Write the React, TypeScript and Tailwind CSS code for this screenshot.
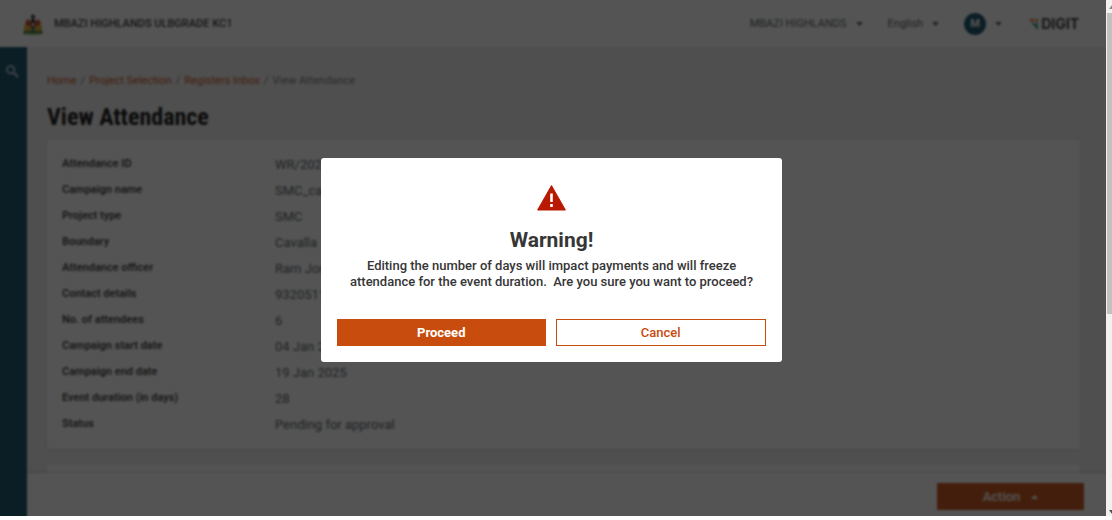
import React from "react";

type Row = { label: string; value: string };

const rows: Row[] = [
  { label: "Attendance ID", value: "WR/2025-01/04/ID-001272" },
  { label: "Campaign name", value: "SMC_campaign" },
  { label: "Project type", value: "SMC" },
  { label: "Boundary", value: "Cavalla" },
  { label: "Attendance officer", value: "Ram Jones" },
  { label: "Contact details", value: "9320511234" },
  { label: "No. of attendees", value: "6" },
  { label: "Campaign start date", value: "04 Jan 2025" },
  { label: "Campaign end date", value: "19 Jan 2025" },
  { label: "Event duration (in days)", value: "28" },
  { label: "Status", value: "Pending for approval" },
];

const crumbs = ["Home", "Project Selection", "Registers Inbox"];

function Caret({ up = false }: { up?: boolean }) {
  return (
    <svg width="7" height="4" viewBox="0 0 7 4" fill="currentColor" aria-hidden="true">
      <path d={up ? "M0 4 3.5 0 7 4z" : "M0 0h7L3.5 4z"} />
    </svg>
  );
}

function Emblem() {
  return (
    <svg width="20" height="21" viewBox="0 0 20 21" aria-hidden="true">
      <path d="M0 17.5Q10 14 20 17.5l-1 2.5q-9 1-18 0z" fill="#2f7a3c" />
      <path d="M3 18.5q7 2.5 14 0v1q-7 2-14 0z" fill="#e0b040" />
      <path d="M1 17 1.5 11 4 5.5 7 9l1 8z" fill="#dba41f" />
      <path d="M19 17l-.5-6L16 5.5 13 9l-1 8z" fill="#dba41f" />
      <path d="M2.5 8 5 5l2 2-1 5-2-1zM17.500 8 15 5l-2 2 1 5 2-1z" fill="#c03020" />
      <path d="M10 4q4 4 3 8-1 3-3 5-2-2-3-5-1-4 3-8z" fill="#a81c1c" />
      <path d="M8 5.500h4V9H8z" fill="#222222" />
      <path d="M7.500 12.500h5L10 17z" fill="#2f7a3c" />
      <path d="M10 0l2.500 2.500L10 6 7.500 2.500z" fill="#333333" />
      <path d="M9 9h2v3H9z" fill="#eeeeee" />
    </svg>
  );
}

function DigitMark() {
  return (
    <svg width="9" height="11" viewBox="0 0 9 11" aria-hidden="true">
      <path d="M0 0h6L4 3H2z" fill="#f47738" />
      <path d="M6 0h3v4L6 2z" fill="#c9a13a" />
      <path d="M2 4h4v3.500z" fill="#2f7fd1" />
      <path d="M6 5l3-1v7L6 8z" fill="#2fa36b" />
    </svg>
  );
}

function Header() {
  return (
    <header className="flex h-[47px] shrink-0 items-center justify-between bg-white pt-px pr-[27px] pl-[23px] text-[11px] text-[#505a5f] shadow-sm">
      <div className="flex items-center gap-[11px]">
        <Emblem />
        <span className="font-medium text-[#363636]">MBAZI HIGHLANDS ULBGRADE KC1</span>
      </div>
      <div className="flex items-center">
        <button type="button" className="mr-[25px] flex items-center gap-[9px]">
          MBAZI HIGHLANDS <Caret />
        </button>
        <button type="button" className="mr-[25px] flex items-center gap-[9px]">
          English <Caret />
        </button>
        <button type="button" className="mr-[27px] flex items-center gap-[9px]">
          <span className="flex size-[22px] items-center justify-center rounded-full bg-[#0b4b66] font-bold text-white">
            M
          </span>
          <Caret />
        </button>
        <div className="flex items-center gap-[3px] text-[#363636]">
          <DigitMark />
          <span className="font-['Inter',sans-serif] text-[14px] leading-[16px] font-bold">DIGIT</span>
        </div>
      </div>
    </header>
  );
}

function Page() {
  return (
    <div className="flex h-full flex-col" inert>
      <Header />
      <div className="flex min-h-0 flex-1">
        <nav aria-label="Sidebar" className="w-[27px] shrink-0 bg-[#0b4b66] pt-[18px] pl-[6px]">
          <button type="button" aria-label="Search" className="block text-[#c5d3da]">
            <svg width="13" height="13" viewBox="0 0 13 13" fill="none" stroke="currentColor" aria-hidden="true">
              <circle cx="4.7" cy="4.7" r="3.7" strokeWidth="1.6" />
              <path d="M7.6 7.6l4.400 4.400" strokeWidth="2" />
            </svg>
          </button>
        </nav>
        <div className="flex min-w-0 flex-1 flex-col bg-[#eeeeee]">
          <main className="min-h-0 flex-1 overflow-hidden pt-[26px] pr-[26px] pl-[20px]">
            <nav aria-label="Breadcrumb" className="flex text-[11px] leading-[16px] text-[#787878]">
              {crumbs.map((c) => (
                <React.Fragment key={c}>
                  <a href="#" className="text-[#c84c0e]">
                    {c}
                  </a>
                  <span className="px-[4px]">/</span>
                </React.Fragment>
              ))}
              <span>View Attendance</span>
            </nav>
            <h1 className="mt-[12px] font-['Roboto_Condensed','Liberation_Sans_Narrow','Roboto',sans-serif] text-[24px] leading-[32px] font-bold text-[#0b0c0c]">
              View Attendance
            </h1>
            <section className="mt-[7px] rounded-sm bg-white px-[15px] pt-[11px] pb-[12px] shadow-sm">
              <dl>
                {rows.map((r) => (
                  <div key={r.label} className="flex h-[26px] items-center">
                    <dt className="w-[213px] text-[11px] leading-[16px] font-semibold text-[#363636]">{r.label}</dt>
                    <dd className="pt-[2px] text-[13px] leading-[16px] text-[#505a5f]">{r.value}</dd>
                  </div>
                ))}
              </dl>
            </section>
            <section className="mt-[16px] h-16 rounded-sm bg-white shadow-sm" />
          </main>
          <footer className="flex justify-end bg-white pt-[10px] pr-[22px] pb-[6px] shadow-[0_-1px_2px_rgba(0,0,0,0.16)]">
            <button
              type="button"
              className="flex h-[27px] w-[147px] items-center justify-center gap-[11px] bg-[#c84c0e] text-[13px] font-medium text-white"
            >
              Action <Caret up />
            </button>
          </footer>
        </div>
      </div>
    </div>
  );
}

function WarningDialog() {
  return (
    <div
      role="alertdialog"
      aria-modal="true"
      aria-labelledby="warning-title"
      aria-describedby="warning-text"
      className="w-full max-w-[461px] rounded-[3px] bg-white px-[16px] pt-[27px] pb-[16px] text-center text-[#363636]"
    >
      <svg className="mx-auto" width="29" height="26" viewBox="0 0 29 26" aria-hidden="true">
        <path d="M14.5 0.6 28.4 25H0.6z" fill="#b91900" stroke="#b91900" strokeLinejoin="round" strokeWidth="1" />
        <path d="M13.2 8.5h2.6v8.5h-2.6zM13.2 19h2.6v3h-2.6z" fill="#fff" />
      </svg>
      <h2 id="warning-title" className="mt-[16px] text-[21px] leading-[26px] font-bold">
        Warning!
      </h2>
      <p id="warning-text" className="mt-[5px] text-[13px] leading-[16px] font-medium whitespace-pre-wrap">
        {"Editing the number of days will impact payments and will freeze attendance for the event duration.  Are you sure you want to proceed?"}
      </p>
      <div className="mt-[29px] flex gap-[10px] text-[13px]">
        <button type="button" className="h-[27px] flex-1 bg-[#c84c0e] font-bold text-white">
          Proceed
        </button>
        <button type="button" className="h-[27px] flex-1 border border-[#c84c0e] font-medium text-[#c84c0e]">
          Cancel
        </button>
      </div>
    </div>
  );
}

function Scrollbar() {
  return (
    <div className="flex w-[6px] shrink-0 flex-col overflow-hidden bg-[#f1f1f1] pl-px" aria-hidden="true">
      <svg className="ml-auto" width="3" height="13" viewBox="0 0 3 13" fill="#8a8a8a">
        <path d="M0 9 3 5v4z" />
      </svg>
      <div className="h-7/12 bg-[#c1c1c1]" />
      <svg className="mt-auto ml-auto" width="3" height="8" viewBox="0 0 3 8" fill="#505050">
        <path d="M0 2h3v4z" />
      </svg>
    </div>
  );
}

export default function App() {
  return (
    <div className="flex h-screen bg-white pb-[4px] font-['Roboto',sans-serif]">
      <div className="relative min-w-0 flex-1 overflow-hidden">
        <Page />
        <div className="absolute inset-0 flex items-center justify-center bg-[rgba(11,12,12,0.7)] pt-[4px] pr-[3px] backdrop-blur-[1px]">
          <WarningDialog />
        </div>
      </div>
      <Scrollbar />
    </div>
  );
}
